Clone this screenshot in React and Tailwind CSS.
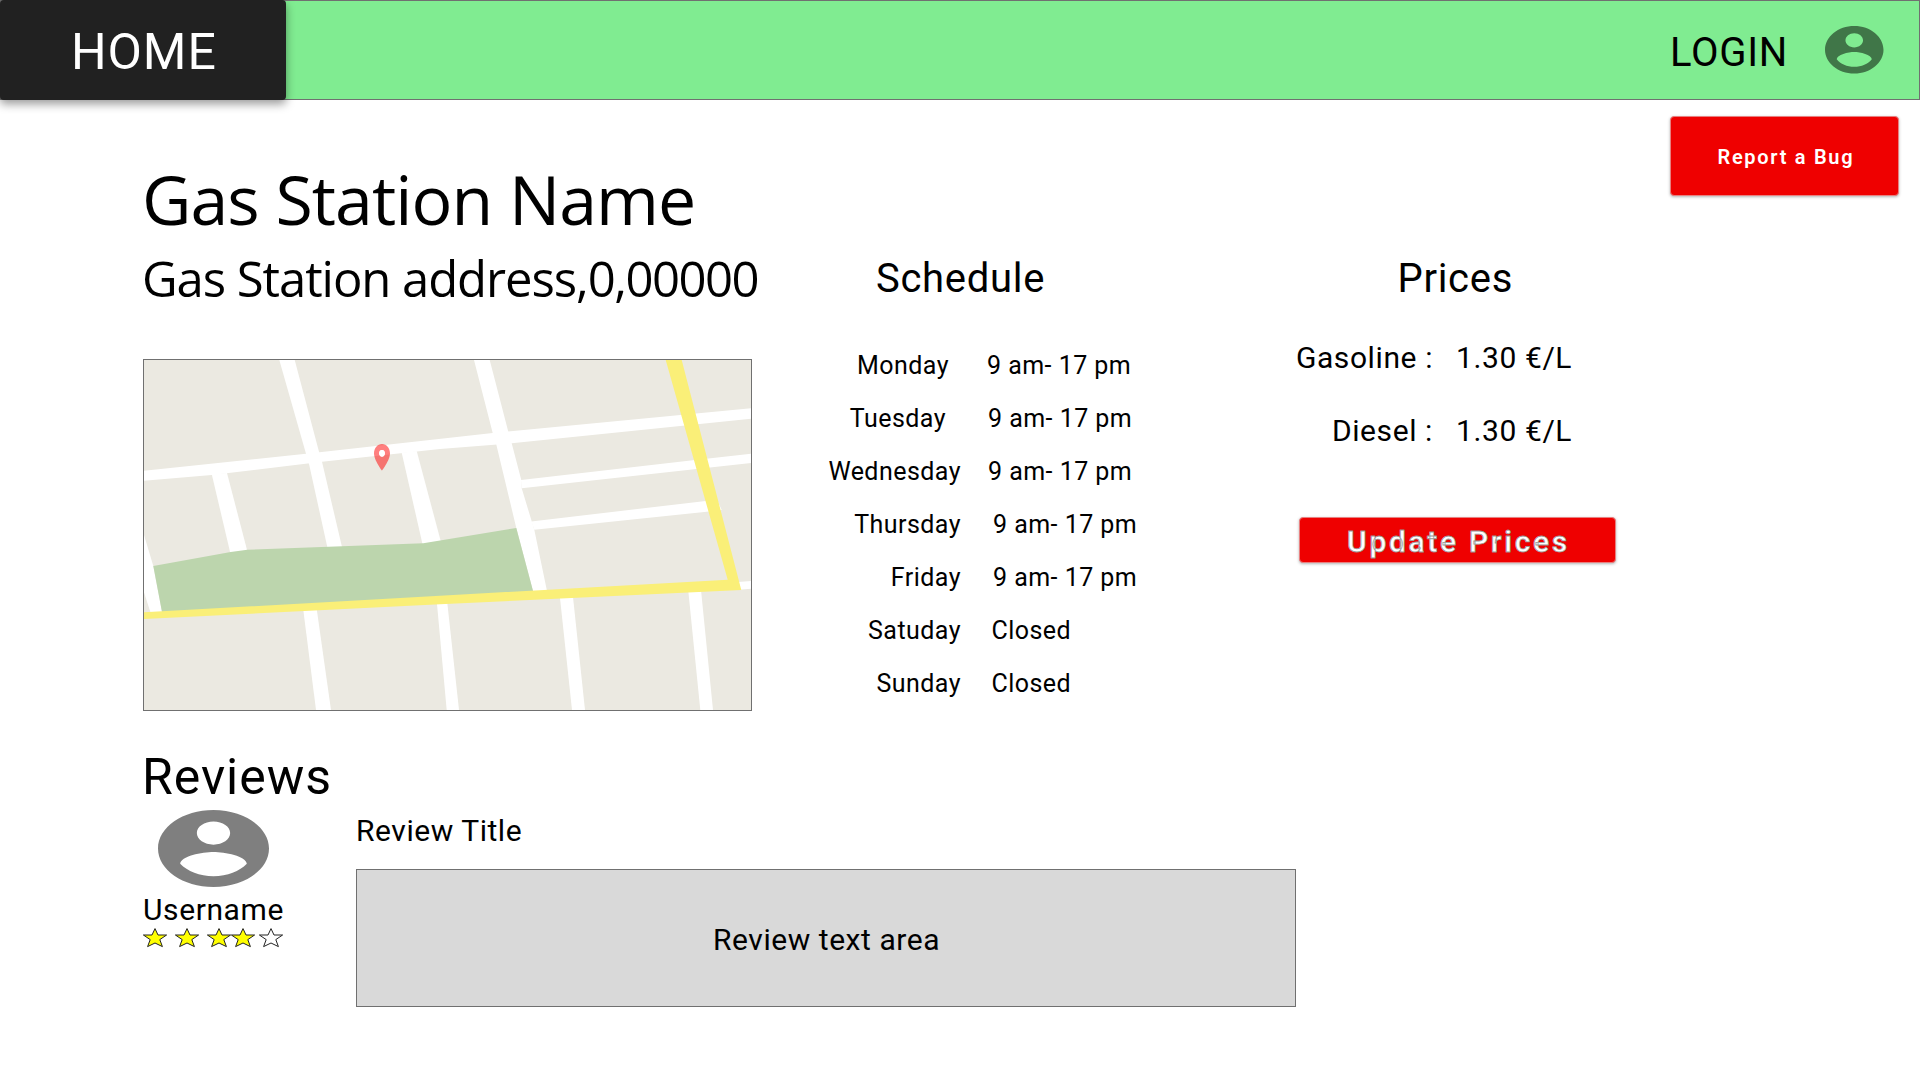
const ACCOUNT =
  "M12 2C6.48 2 2 6.48 2 12s4.48 10 10 10 10-4.48 10-10S17.52 2 12 2zm0 3c1.66 0 3 1.34 3 3s-1.34 3-3 3-3-1.34-3-3 1.34-3 3-3zm0 14.2c-2.5 0-4.71-1.28-6-3.22.03-1.99 4-3.08 6-3.08 1.99 0 5.97 1.09 6 3.08-1.29 1.94-3.5 3.22-6 3.22z";

function AccountIcon({ className }) {
  return (
    <svg viewBox="2 2 20 20" preserveAspectRatio="none" className={className} fill="#000" fillOpacity="0.5">
      <path d={ACCOUNT} />
    </svg>
  );
}

function Star({ filled, className }) {
  return (
    <svg viewBox="0 0 24 19" className={`h-[19px] w-6 shrink-0 overflow-visible ${className || ""}`}>
      <path
        d="M12 0.6 15 7H23.6L16.8 11.6 19.4 18.6 12 15 4.6 18.6 7.2 11.6 0.4 7H9Z"
        fill={filled ? "#ffff00" : "#fff"}
        stroke="#222"
        strokeWidth="1"
      />
    </svg>
  );
}

function StationMap() {
  return (
    <div className="mt-12 h-[352px] w-[609px] overflow-hidden border border-[#707070] bg-[#ebe9e1]">
      <svg viewBox="1 1 607 350" className="block h-[350px] w-[607px]">
        <g fill="#fff">
          <path d="M136.3 1H151.7L176 92.7 179 102.7 199 188H184.3L166.3 106.3 163 94.7Z" />
          <path d="M1 111.7 163 94.7 349.7 74 608 49.3V59.7L368.7 84.3 297 90 179 102.7 68.7 116 1 121.7Z" />
          <path d="M68.7 115 84 114 104.3 192 87.3 194Z" />
          <path d="M258.7 93.7 273.7 92 297.7 182 279.7 186Z" />
          <path d="M331 1H346.7L365.3 72.7 368.7 84.3 378.3 121 378.7 129.3 388.7 162.3 391.3 170.7 404 232 390.3 233 373.3 169 353 84.3 349.7 74Z" />
          <path d="M378 121 552 101 608 94.7V104L378.7 129.3Z" />
          <path d="M388.3 162.4 562.7 142 575 143 578.7 151 563.7 152.7 391.3 170.7Z" />
          <path d="M1 176 10.3 207 19 253 7.7 254 1 233.3Z" />
          <path d="M160.3 251 173.7 250 188 351H173Z" />
          <path d="M294 245 304.3 244 316 351H303.7Z" />
          <path d="M417 239 430 238 442 351H429Z" />
          <path d="M545.3 232 558 231 570 351H557.3Z" />
          <path d="M595 223 608 222V229.7L596 230.7Z" />
        </g>
        <path fill="#bcd5ad" d="M10.3 207 87.7 193 104.3 190.7 280.3 184.3 373.3 169 390.3 233 297 238 19 253Z" />
        <path fill="#faef78" d="M522.7 1H538.7L598.3 231 297 245.3 1 260V253.3L297 236.7 584.7 220.7Z" />
        <svg x="231" y="85" width="16" height="26.7" viewBox="5 2 14 20" preserveAspectRatio="none">
          <path
            fill="#f00"
            fillOpacity="0.5"
            d="M12 2C8.13 2 5 5.13 5 9c0 5.25 7 13 7 13s7-7.75 7-13c0-3.87-3.13-7-7-7zm0 9.5c-1.38 0-2.5-1.12-2.5-2.5s1.12-2.5 2.5-2.5 2.5 1.12 2.5 2.5-1.12 2.5-2.5 2.5z"
          />
          <circle cx="12" cy="9" r="2.5" fill="#fff" />
        </svg>
      </svg>
    </div>
  );
}

const DAYS = [
  ["Monday", "9 am- 17 pm", "pr-[12px]", "pl-[26px]"],
  ["Tuesday", "9 am- 17 pm", "pr-[15px]", "pl-[27px]"],
  ["Wednesday", "9 am- 17 pm", "", "pl-[27px]"],
  ["Thursday", "9 am- 17 pm", "", "pl-[32px]"],
  ["Friday", "9 am- 17 pm", "", "pl-[32px]"],
  ["Satuday", "Closed", "", "pl-[30.5px]"],
  ["Sunday", "Closed", "", "pl-[30.5px]"],
];

const PRICES = [
  ["Gasoline :", "1.30 €/L"],
  ["Diesel :", "1.30 €/L"],
];

export default function App() {
  return (
    <div className="h-[1080px] w-[1920px] overflow-hidden bg-white font-['Roboto',sans-serif] text-black whitespace-nowrap">
      <header className="flex h-[100px] border border-[#707070] bg-[#80ec91]">
        <div className="-mt-px -ml-px flex h-[100px] w-[286px] items-center rounded-[4px] bg-[#212121] pt-[4px] pl-[71px] text-[50px] leading-[60px] tracking-[0.9px] text-white shadow-[0_4px_10px_rgba(0,0,0,0.4)]">
          HOME
        </div>
        <div className="mt-[28px] ml-auto text-[40px] leading-[48px] tracking-[0.7px]">LOGIN</div>
        <AccountIcon className="mt-[25px] mr-[35.5px] ml-[37px] h-[47.5px] w-[58.5px]" />
      </header>

      <main className="flex h-[646px] pl-[143px]">
        <section className="w-[677px] pt-[53px] font-['Open_Sans',sans-serif]">
          <h1 className="-ml-px text-[68px] leading-[92px] tracking-[-0.95px]">Gas Station Name</h1>
          <h2 className="-ml-px text-[49px] leading-[66px]">
            <span className="tracking-[-1.05px]">Gas Station address,</span>
            <span className="tracking-[-1.5px]">0,00000</span>
          </h2>
          <StationMap />
        </section>

        <section className="w-[470px] pt-[155px]">
          <h2 className="pl-[56px] text-[40px] leading-[48px] tracking-[0.7px]">Schedule</h2>
          <div className="mt-[36px] text-[25px] leading-[53px] tracking-[0.46px]">
            {DAYS.map(([day, hours, dayPad, hoursPad]) => (
              <div key={day} className="flex">
                <div className={`w-[141px] text-right ${dayPad}`}>{day}</div>
                <div className={hoursPad}>{hours}</div>
              </div>
            ))}
          </div>
        </section>

        <section className="w-[330px] pt-[155px]">
          <h2 className="pl-[107.5px] text-[40px] leading-[48px] tracking-[0.7px]">Prices</h2>
          <div className="mt-[18px] text-[30px] leading-[73px] tracking-[0.6px]">
            {PRICES.map(([fuel, price]) => (
              <div key={fuel} className="flex">
                <div className="w-[143px] text-right">{fuel}</div>
                <div className="pl-[23px]">{price}</div>
              </div>
            ))}
          </div>
          <button className="mt-[50px] ml-[9px] flex h-[46px] w-[317px] items-center justify-center rounded-[4px] border border-[#e88080] bg-[#ef0000] pt-[3px] pl-[2px] text-[30px] leading-[36px] font-semibold tracking-[2.65px] text-white shadow-[0_1px_3px_rgba(0,0,0,0.3)] [-webkit-text-stroke:0.8px_#999]">
            Update Prices
          </button>
        </section>

        <button className="mt-[16px] mr-[21px] ml-auto flex h-[80px] w-[229.5px] items-center rounded-[4px] border border-[#e88080] bg-[#ef0000] pt-[2px] pl-[47px] text-[20px] leading-[24px] font-semibold tracking-[1.7px] text-white shadow-[0_1px_3px_rgba(0,0,0,0.3)]">
          Report a Bug
        </button>
      </main>

      <section className="pl-[143px]">
        <h2 className="-ml-px pt-px text-[50px] leading-[60px] tracking-[0.95px]">Reviews</h2>
        <div className="flex">
          <div className="flex w-[213px] flex-col pt-[3px]">
            <AccountIcon className="ml-[15px] h-[77px] w-[111px]" />
            <div className="mt-[5px] text-[30px] leading-[36px] tracking-[0.6px]">Username</div>
            <div className="flex">
              <Star filled />
              <Star filled className="ml-[8px]" />
              <Star filled className="ml-[8px]" />
              <Star filled />
              <Star className="ml-[4px]" />
            </div>
          </div>
          <div>
            <div className="mt-[6px] text-[30px] leading-[36px] tracking-[0.55px]">Review Title</div>
            <div className="mt-[20px] flex h-[138px] w-[940px] items-center border border-[#707070] bg-[#d9d9d9] pt-[4px] pl-[356px] text-[30px] leading-[36px] tracking-[0.55px]">
              Review text area
            </div>
          </div>
        </div>
      </section>
    </div>
  );
}
